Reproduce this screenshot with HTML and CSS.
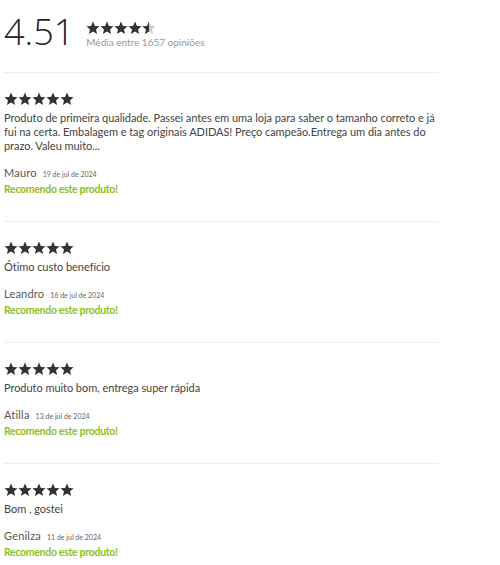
FILE: index.html
```html
<!DOCTYPE html>
<html lang="pt-BR">
<head>
  <meta charset="UTF-8">
  <title>Avaliações</title>
  <link rel="stylesheet" href="styles.css">
</head>
<body>
  <svg width="0" height="0" class="defs">
    <defs>
      <path id="star" d="M7 0.6l1.9 4.3 4.6 0.4-3.5 3.1 1.1 4.6L7 10.6 2.9 13l1.1-4.6L0.5 5.3l4.6-0.4z"/>
      <clipPath id="half"><rect x="0" y="0" width="7" height="14"/></clipPath>
    </defs>
  </svg>

  <div class="reviews">
    <div class="summary">
      <div class="average">4.51</div>
      <div class="summary-info">
        <div class="stars small">
          <svg viewBox="0 0 14 14"><use href="#star"/></svg>
          <svg viewBox="0 0 14 14"><use href="#star"/></svg>
          <svg viewBox="0 0 14 14"><use href="#star"/></svg>
          <svg viewBox="0 0 14 14"><use href="#star"/></svg>
          <svg viewBox="0 0 14 14"><use href="#star" class="empty"/><use href="#star" clip-path="url(#half)"/></svg>
        </div>
        <div class="count">Média entre 1657 opiniões</div>
      </div>
    </div>

    <div class="review">
      <div class="stars">
        <svg viewBox="0 0 14 14"><use href="#star"/></svg>
        <svg viewBox="0 0 14 14"><use href="#star"/></svg>
        <svg viewBox="0 0 14 14"><use href="#star"/></svg>
        <svg viewBox="0 0 14 14"><use href="#star"/></svg>
        <svg viewBox="0 0 14 14"><use href="#star"/></svg>
      </div>
      <p class="text">Produto de primeira qualidade. Passei antes em uma loja para saber o tamanho correto e já fui na certa. Embalagem e tag originais ADIDAS! Preço campeão.Entrega um dia antes do prazo. Valeu muito...</p>
      <div class="author">Mauro <span class="date">19 de jul de 2024</span></div>
      <div class="recommend">Recomendo este produto!</div>
    </div>

    <div class="review">
      <div class="stars">
        <svg viewBox="0 0 14 14"><use href="#star"/></svg>
        <svg viewBox="0 0 14 14"><use href="#star"/></svg>
        <svg viewBox="0 0 14 14"><use href="#star"/></svg>
        <svg viewBox="0 0 14 14"><use href="#star"/></svg>
        <svg viewBox="0 0 14 14"><use href="#star"/></svg>
      </div>
      <p class="text">Ótimo custo benefício</p>
      <div class="author">Leandro <span class="date">16 de jul de 2024</span></div>
      <div class="recommend">Recomendo este produto!</div>
    </div>

    <div class="review">
      <div class="stars">
        <svg viewBox="0 0 14 14"><use href="#star"/></svg>
        <svg viewBox="0 0 14 14"><use href="#star"/></svg>
        <svg viewBox="0 0 14 14"><use href="#star"/></svg>
        <svg viewBox="0 0 14 14"><use href="#star"/></svg>
        <svg viewBox="0 0 14 14"><use href="#star"/></svg>
      </div>
      <p class="text">Produto muito bom, entrega super rápida</p>
      <div class="author">Atilla <span class="date">13 de jul de 2024</span></div>
      <div class="recommend">Recomendo este produto!</div>
    </div>

    <div class="review">
      <div class="stars">
        <svg viewBox="0 0 14 14"><use href="#star"/></svg>
        <svg viewBox="0 0 14 14"><use href="#star"/></svg>
        <svg viewBox="0 0 14 14"><use href="#star"/></svg>
        <svg viewBox="0 0 14 14"><use href="#star"/></svg>
        <svg viewBox="0 0 14 14"><use href="#star"/></svg>
      </div>
      <p class="text">Bom , gostei</p>
      <div class="author">Genilza <span class="date">11 de jul de 2024</span></div>
      <div class="recommend">Recomendo este produto!</div>
    </div>
  </div>
</body>
</html>
```

FILE: styles.css
```css
body {
  margin: 0;
  padding: 0 4px;
  font-family: Lato, Arial, sans-serif;
  color: #444;
  background: #fff;
}
.defs {
  position: absolute;
}
.reviews {
  width: 435px;
}
.summary {
  display: flex;
  align-items: flex-start;
  gap: 12px;
  height: 73px;
  border-bottom: 1px solid #eee;
  box-sizing: border-box;
}
.average {
  font-family: "Open Sans", Arial, sans-serif;
  font-size: 36px;
  font-weight: 300;
  color: #222;
  line-height: 64px;
}
.summary-info {
  padding-top: 21px;
}
.stars {
  display: flex;
  height: 14px;
}
.stars svg {
  width: 14px;
  height: 14px;
  fill: #333;
}
.stars .empty {
  fill: #ccc;
}
.count {
  font-size: 10px;
  color: #999;
  margin-top: 1px;
}
.review {
  padding: 19px 0 24px;
  border-bottom: 1px solid #eee;
}
.review:first-of-type {
  padding-bottom: 22px;
}
.review:last-child {
  border-bottom: none;
}
.text {
  margin: 5px 0 12px;
  font-size: 11px;
  letter-spacing: -0.05px;
  line-height: 14px;
  color: #444;
}
.author {
  font-size: 11px;
  letter-spacing: 0.2px;
  line-height: 16px;
  color: #555;
}
.date {
  font-size: 7px;
  letter-spacing: 0;
  color: #666;
  margin-left: 3px;
}
.recommend {
  font-size: 10.5px;
  letter-spacing: -0.3px;
  line-height: 15px;
  color: #8dc21f;
  font-weight: 700;
}
```
